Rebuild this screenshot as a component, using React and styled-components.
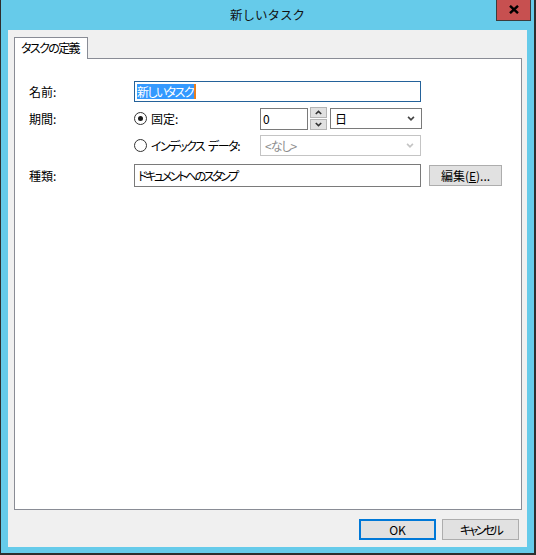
import React from 'react';
import styled, { createGlobalStyle } from 'styled-components';

const Global = createGlobalStyle`
  html, body { margin: 0; padding: 0; background: #fff; }
  body {
    font-family: "Noto Sans CJK JP", "Noto Sans", sans-serif;
    font-size: 12px;
    color: #000;
    font-feature-settings: "palt" 1;
    white-space: nowrap;
  }
  * { box-sizing: border-box; }
`;

const Window = styled.div`
  width: 536px;
  height: 555px;
  background: #66cbea;
  border-left: 1px solid #2e2e2e;
  border-right: 2px solid #2e2e2e;
  border-bottom: 2px solid #2e2e2e;
  display: flex;
  flex-direction: column;
`;

const TitleBar = styled.div`
  position: relative;
  height: 30px;
  flex: none;
  display: flex;
  align-items: center;
  justify-content: center;
  font-size: 12.5px;
  color: #111;
  padding-bottom: 1px;
  font-feature-settings: normal;
`;

const CloseButton = styled.div`
  position: absolute;
  top: -1px;
  right: 3px;
  width: 35px;
  height: 22px;
  background: #c75050;
  border: 1px solid #3c3c3c;
  border-top: none;
  display: flex;
  align-items: center;
  justify-content: center;
`;

const Client = styled.div`
  flex: 1;
  margin: 0 7px 6px 7px;
  background: #f0f0f0;
  display: flex;
  flex-direction: column;
  padding: 7px 5px 7px 6px;
`;

const TabStrip = styled.div`
  display: flex;
  height: 21px;
  flex: none;
`;

const Tab = styled.div`
  position: relative;
  z-index: 1;
  width: 74px;
  height: 22px;
  background: #fff;
  border: 1px solid #898c95;
  border-bottom: none;
  padding-left: 6px;
  display: flex;
  align-items: center;
  padding-bottom: 2px;
`;

const Panel = styled.div`
  flex: 1;
  background: #fff;
  border: 1px solid #898c95;
  padding: 22px 0 0 14px;
  display: flex;
  flex-direction: column;
`;

const Row = styled.div`
  display: flex;
  align-items: center;
  height: ${p => p.$h}px;
  margin-top: ${p => p.$mt || 0}px;
`;

const Label = styled.div`
  width: 105px;
  flex: none;
`;

const Kana = styled.span`
  letter-spacing: ${p => p.$ls}px;
  margin-right: ${p => p.$mr || 0}px;
`;

const TextBox = styled.div`
  width: ${p => p.$w}px;
  height: ${p => p.$h || 21}px;
  border: 1px solid ${p => (p.$focus ? '#24629a' : '#7a7a7a')};
  background: #fff;
  display: flex;
  align-items: center;
  padding-left: ${p => p.$pl || 2}px;
  flex: none;
`;

const Selected = styled.span`
  background: #3399ff;
  color: #fff;
  line-height: 15px;
  letter-spacing: -1.6px;
  padding-right: 1px;
  border-right: 2px solid #e87d1e;
`;

const Radio = styled.div`
  width: 126px;
  flex: none;
  display: flex;
  align-items: center;
  gap: 4px;
`;

const RadioText = styled.span`
  display: flex;
`;

const RadioCircle = styled.span`
  width: 13px;
  height: 13px;
  border-radius: 50%;
  border: 1px solid #333;
  background: #fff;
  display: flex;
  align-items: center;
  justify-content: center;
  &::after {
    content: '';
    width: 5px;
    height: 5px;
    border-radius: 50%;
    background: ${p => (p.$checked ? '#1a1a1a' : 'transparent')};
  }
`;

const SpinButtons = styled.div`
  display: flex;
  flex-direction: column;
  gap: 1px;
  margin-left: 2px;
  height: 23px;
  flex: none;
`;

const SpinButton = styled.div`
  width: 17px;
  height: 11px;
  background: #e1e1e1;
  border: 1px solid #b5b5b5;
  display: flex;
  align-items: center;
  justify-content: center;
`;

const Combo = styled.div`
  width: ${p => p.$w}px;
  height: 21px;
  margin-left: ${p => p.$ml || 0}px;
  border: 1px solid ${p => (p.$disabled ? '#c4c4c4' : '#7a7a7a')};
  background: #fff;
  color: ${p => (p.$disabled ? '#8d8d8d' : '#000')};
  display: flex;
  align-items: center;
  justify-content: space-between;
  padding: 0 6px 0 4px;
  flex: none;
`;

const PushButton = styled.div`
  width: ${p => p.$w}px;
  height: 21px;
  margin-left: ${p => p.$ml || 0}px;
  background: #e1e1e1;
  border: 1px solid ${p => (p.$default ? '#0078d7' : '#adadad')};
  box-shadow: ${p => (p.$default ? 'inset 0 0 0 1px #0078d7' : 'none')};
  display: flex;
  align-items: center;
  justify-content: center;
  flex: none;
  padding-bottom: 1px;
`;

const Underline = styled.span`
  text-decoration: underline;
`;

const Footer = styled.div`
  display: flex;
  justify-content: flex-end;
  gap: 6px;
  margin-top: 9px;
  margin-right: 3px;
  flex: none;
`;

const Chevron = ({ color = '#444', w = 8, h = 5, up = false }) => (
  <svg width={w} height={h} viewBox="0 0 9 6">
    <path
      d={up ? 'M1 5 L4.5 1.5 L8 5' : 'M1 1 L4.5 4.5 L8 1'}
      fill="none"
      stroke={color}
      strokeWidth="2"
    />
  </svg>
);

export default function App() {
  return (
    <>
      <Global />
      <Window>
        <TitleBar>
          新しいタスク
          <CloseButton>
            <svg width="10" height="9" viewBox="0 0 10 9">
              <path d="M1 0.8 L9 8.2 M9 0.8 L1 8.2" stroke="#000" strokeWidth="2.4" />
            </svg>
          </CloseButton>
        </TitleBar>
        <Client>
          <TabStrip>
            <Tab>
              <Kana $ls={-1.6}>タスクの定義</Kana>
            </Tab>
          </TabStrip>
          <Panel>
            <Row $h={21}>
              <Label>名前:</Label>
              <TextBox $w={287} $focus>
                <Selected>新しいタスク</Selected>
              </TextBox>
            </Row>
            <Row $h={23} $mt={5}>
              <Label>期間:</Label>
              <Radio>
                <RadioCircle $checked />
                固定:
              </Radio>
              <TextBox $w={48} $h={22}>0</TextBox>
              <SpinButtons>
                <SpinButton><Chevron w={7} h={5} up color="#333" /></SpinButton>
                <SpinButton><Chevron w={7} h={5} color="#333" /></SpinButton>
              </SpinButtons>
              <Combo $w={92} $ml={3}>
                <span>日</span>
                <Chevron />
              </Combo>
            </Row>
            <Row $h={21} $mt={5}>
              <Label />
              <Radio>
                <RadioCircle />
                <RadioText>
                  <Kana $ls={-1.7} $mr={4}>インデックス</Kana>
                  <Kana $ls={-1.4}>データ:</Kana>
                </RadioText>
              </Radio>
              <Combo $w={161} $disabled>
                <Kana $ls={-1}>&lt;なし&gt;</Kana>
                <Chevron color="#c4c4c4" />
              </Combo>
            </Row>
            <Row $h={23} $mt={8}>
              <Label>種類:</Label>
              <TextBox $w={287} $h={23} $pl={3}>
                <Kana $ls={-2.4}>ドキュメントへのスタンプ</Kana>
              </TextBox>
              <PushButton $w={73} $ml={8}>
                編集(<Underline>E</Underline>)...
              </PushButton>
            </Row>
          </Panel>
          <Footer>
            <PushButton $w={77} $default>OK</PushButton>
            <PushButton $w={77}>
              <Kana $ls={-2.6}>キャンセル</Kana>
            </PushButton>
          </Footer>
        </Client>
      </Window>
    </>
  );
}
